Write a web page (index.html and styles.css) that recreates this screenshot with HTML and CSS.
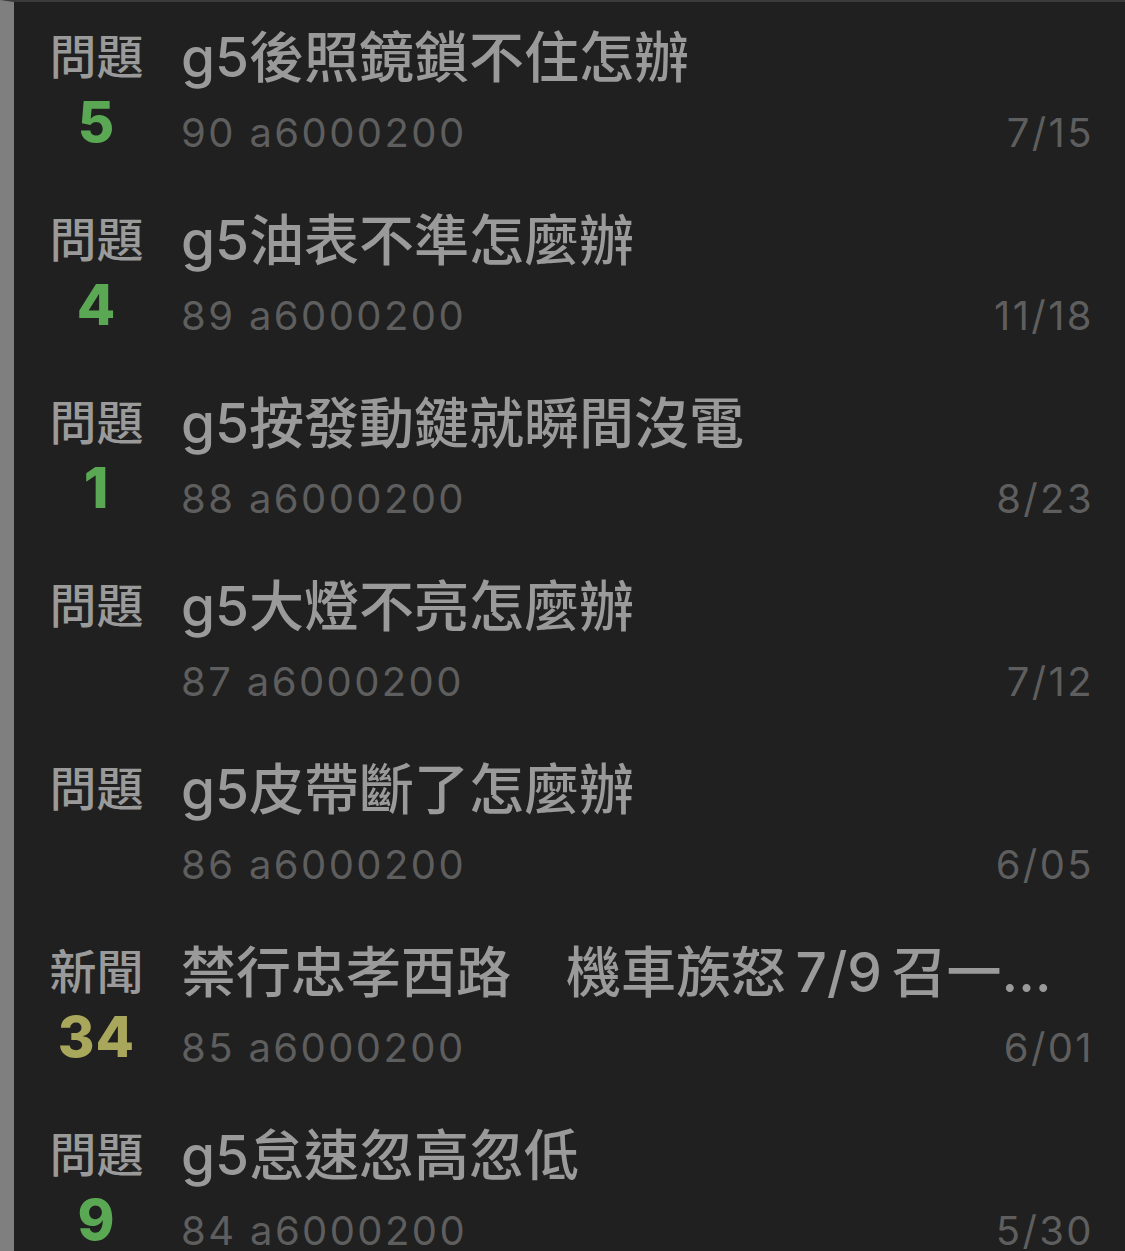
FILE: index.html
```html
<!DOCTYPE html>
<html lang="zh-Hant">
<head>
<meta charset="utf-8">
<link rel="stylesheet" href="styles.css">
</head>
<body>
<div class="list">
  <div class="row">
    <div class="side"><div class="tag">問題</div><div class="count green">5</div></div>
    <div class="main"><div class="title">g5後照鏡鎖不住怎辦</div><div class="meta"><span>90 a6000200</span><span>7/15</span></div></div>
  </div>
  <div class="row">
    <div class="side"><div class="tag">問題</div><div class="count green">4</div></div>
    <div class="main"><div class="title">g5油表不準怎麼辦</div><div class="meta"><span>89 a6000200</span><span>11/18</span></div></div>
  </div>
  <div class="row">
    <div class="side"><div class="tag">問題</div><div class="count green">1</div></div>
    <div class="main"><div class="title">g5按發動鍵就瞬間沒電</div><div class="meta"><span>88 a6000200</span><span>8/23</span></div></div>
  </div>
  <div class="row">
    <div class="side"><div class="tag">問題</div><div class="count"></div></div>
    <div class="main"><div class="title">g5大燈不亮怎麼辦</div><div class="meta"><span>87 a6000200</span><span>7/12</span></div></div>
  </div>
  <div class="row">
    <div class="side"><div class="tag">問題</div><div class="count"></div></div>
    <div class="main"><div class="title">g5皮帶斷了怎麼辦</div><div class="meta"><span>86 a6000200</span><span>6/05</span></div></div>
  </div>
  <div class="row">
    <div class="side"><div class="tag">新聞</div><div class="count yellow">34</div></div>
    <div class="main"><div class="title">禁行忠孝西路　機車族怒&#8201;7/9&#8201;召一…</div><div class="meta"><span>85 a6000200</span><span>6/01</span></div></div>
  </div>
  <div class="row">
    <div class="side"><div class="tag">問題</div><div class="count green">9</div></div>
    <div class="main"><div class="title">g5怠速忽高忽低</div><div class="meta"><span>84 a6000200</span><span>5/30</span></div></div>
  </div>
</div>
</body>
</html>
```
FILE: styles.css
```css
html, body {
  margin: 0;
  padding: 0;
}
body {
  background: #202020;
  border-left: 14px solid #7f7f7f;
  border-top: 2px solid #3a3a3a;
  height: 1251px;
  box-sizing: border-box;
  overflow: hidden;
  font-family: "Inter", "Noto Sans CJK TC", sans-serif;
}
.list {
  display: flex;
  flex-direction: column;
}
.row {
  display: flex;
  height: 183px;
  padding-top: 22px;
  box-sizing: border-box;
}
.side {
  width: 95px;
  margin-left: 35px;
  margin-right: 37px;
  display: flex;
  flex-direction: column;
  align-items: center;
}
.tag {
  font-size: 47px;
  line-height: 66px;
  font-weight: 500;
  color: #9a9a9a;
  white-space: nowrap;
}
.count {
  font-size: 56px;
  line-height: 64px;
  height: 64px;
  font-weight: 800;
  letter-spacing: 1px;
}
.green { color: #5aa854; }
.yellow { color: #a9a75b; }
.main {
  flex: 1;
  padding-right: 31px;
  min-width: 0;
}
.title {
  font-size: 55px;
  line-height: 66px;
  font-weight: 500;
  color: #9a9a9a;
  white-space: nowrap;
  overflow: hidden;
}
.meta {
  margin-top: 15px;
  display: flex;
  justify-content: space-between;
  font-size: 40px;
  line-height: 56px;
  letter-spacing: 2.4px;
  color: #5e5e5e;
}
```
